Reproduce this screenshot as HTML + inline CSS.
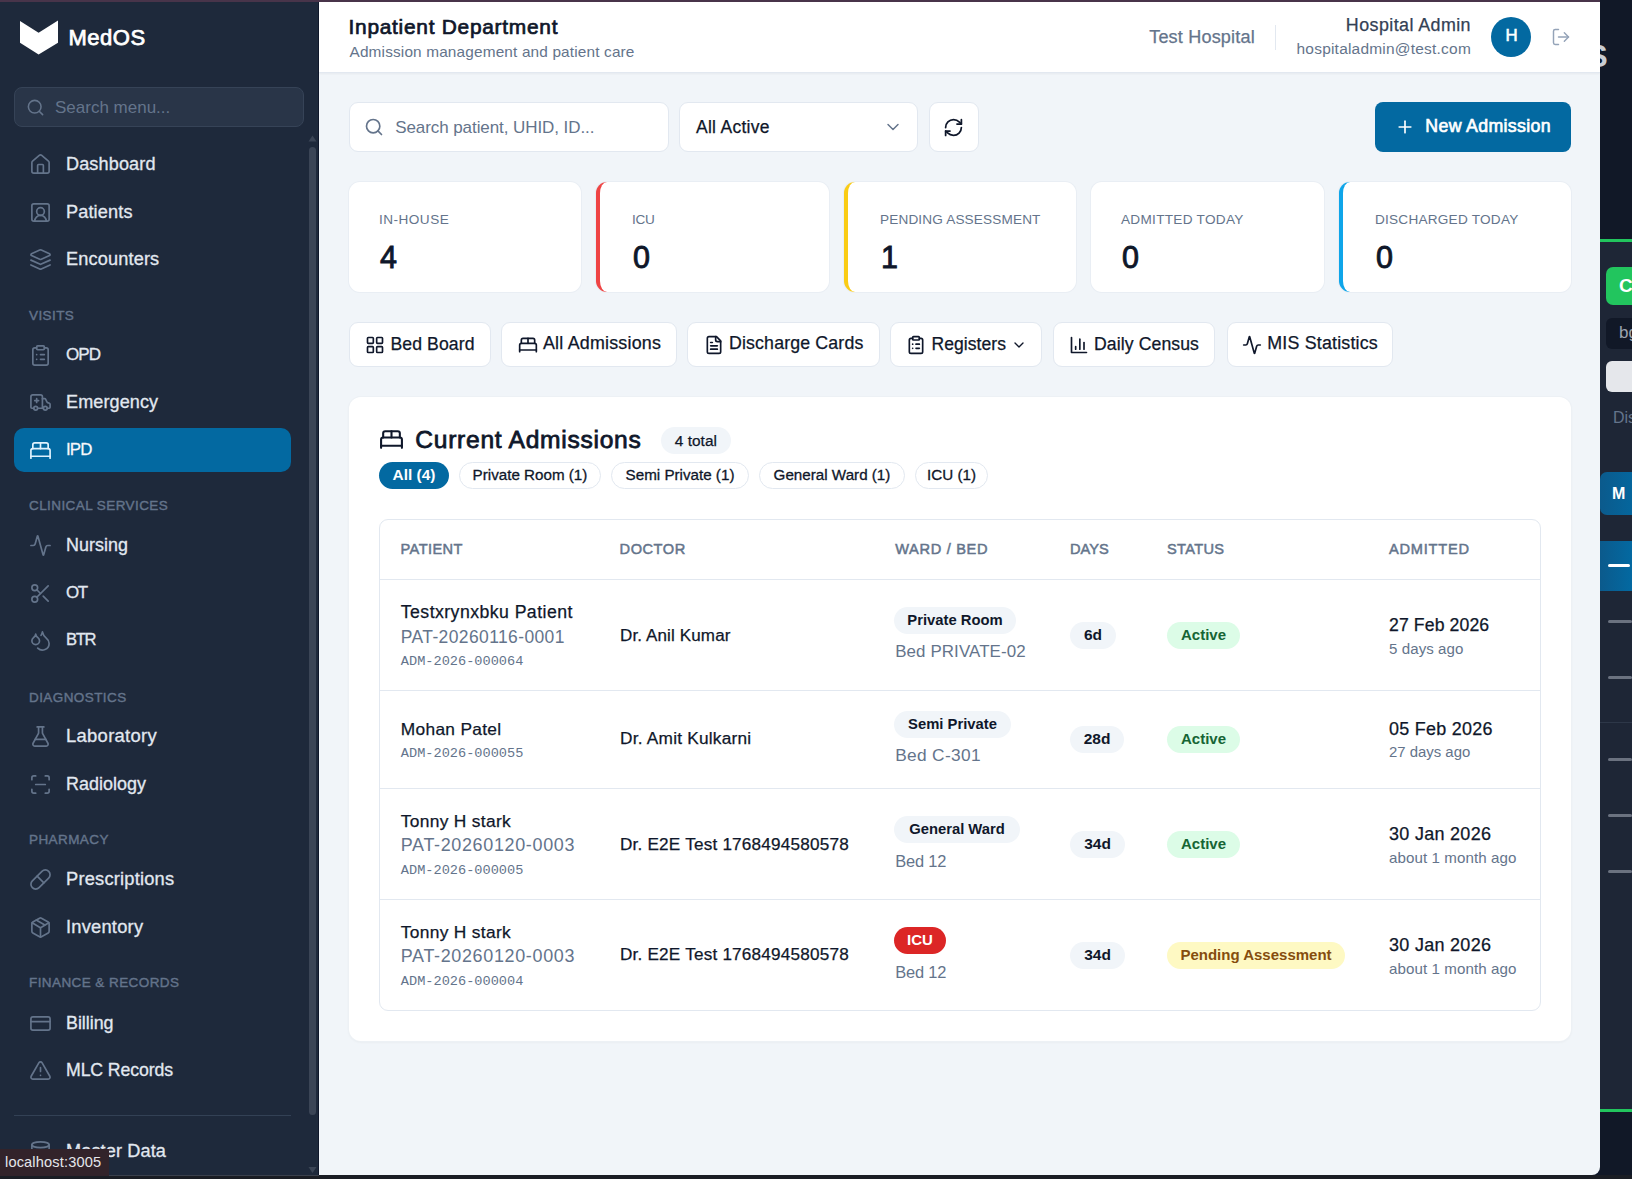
<!DOCTYPE html>
<html><head><meta charset="utf-8">
<style>
*{box-sizing:border-box;margin:0;padding:0}
html,body{width:1632px;height:1179px;overflow:hidden;background:#0f172a;font-family:"Liberation Sans",sans-serif}
.abs{position:absolute}
svg{display:block}
#topstrip{position:absolute;left:0;top:0;width:1600px;height:2px;background:#48344a}
#side{position:absolute;left:0;top:2px;width:319px;height:1173px;background:#1e293b;border-right:1px solid #0f172a;overflow:hidden}
#main{position:absolute;left:319px;top:2px;width:1281px;height:1173px;background:#f1f5f9;overflow:hidden;border-bottom-right-radius:8px}
#right{position:absolute;left:1600px;top:0;width:32px;height:1179px;background:#111827;overflow:hidden}
#bottomstrip{position:absolute;left:0;top:1175px;width:1632px;height:4px;background:#1a1d24}
.nav{position:absolute;left:14px;width:277px;height:44px;border-radius:10px}
.nav .ic{position:absolute;left:15px;top:11px;width:23px;height:23px;color:#64748b}
.nav .tx{position:absolute;left:52px;top:0;line-height:44px;font-size:18.3px;color:#e2e8f0;white-space:nowrap;-webkit-text-stroke:0.3px #e2e8f0}
.nav.act{background:#0369a1}
.nav.act .ic{color:#e0f2fe}
.nav.act .tx{color:#fff}
.t{position:absolute;white-space:nowrap}
.sec{position:absolute;left:29px;font-size:13.5px;line-height:1.15;letter-spacing:0.42px;color:#64748b;font-weight:400;-webkit-text-stroke:0.4px #64748b;white-space:nowrap}
</style></head><body>
<div id="topstrip"></div>
<div id="side">
  <svg class="abs" style="left:0;top:-2px" width="160" height="70">
    <polygon points="20,21 38.6,32.7 58,20.6 58,42.8 38.6,54.6 20,42.8" fill="#fff"/>
  </svg>
  <div class="abs" style="left:68.5px;top:23px;font-size:22px;font-weight:400;letter-spacing:0.5px;-webkit-text-stroke:0.75px #fff;color:#fff;line-height:26px">MedOS</div>
  <div class="abs" style="left:14px;top:85px;width:290px;height:40px;border-radius:8px;background:#293548;border:1px solid #364357"></div>
  <svg class="abs" style="left:26px;top:96px" width="19" height="19" viewBox="0 0 24 24" fill="none" stroke="#64748b" stroke-width="2" stroke-linecap="round" stroke-linejoin="round"><circle cx="11" cy="11" r="8"/><path d="m21 21-4.3-4.3"/></svg>
  <div class="t" style="left:55px;top:96.6px;font-size:17px;line-height:17px;color:#64748b">Search menu...</div>
  <div class="abs" style="left:309px;top:145px;width:7px;height:968px;border-radius:4px;background:#3b4556"></div>
  <svg class="abs" style="left:308px;top:132px" width="10" height="8"><polygon points="0.5,7.5 4.5,1.5 8.5,7.5" fill="#3b4556"/></svg>
  <svg class="abs" style="left:308px;top:1164px" width="10" height="8"><polygon points="0.5,1 4.5,7 8.5,1" fill="#3b4556"/></svg>
  <div class="abs" style="left:14px;top:1113px;width:277px;height:1px;background:#334155"></div>
<div class="nav" style="top:139.8px"><svg class="ic" viewBox="0 0 24 24" fill="none" stroke="currentColor" stroke-width="1.75" stroke-linecap="round" stroke-linejoin="round"><path d="M15 21v-8a1 1 0 0 0-1-1h-4a1 1 0 0 0-1 1v8"/><path d="M3 10a2 2 0 0 1 .709-1.528l7-5.999a2 2 0 0 1 2.582 0l7 5.999A2 2 0 0 1 21 10v9a2 2 0 0 1-2 2H5a2 2 0 0 1-2-2z"/></svg><div class="tx" style="font-size:18.09px;letter-spacing:0.128px">Dashboard</div></div>
<div class="nav" style="top:187.6px"><svg class="ic" viewBox="0 0 24 24" fill="none" stroke="currentColor" stroke-width="1.75" stroke-linecap="round" stroke-linejoin="round"><path d="M18 21a6 6 0 0 0-12 0"/><circle cx="12" cy="11" r="4"/><rect width="18" height="18" x="3" y="3" rx="2"/></svg><div class="tx" style="font-size:18.14px;letter-spacing:0.136px">Patients</div></div>
<div class="nav" style="top:234.8px"><svg class="ic" viewBox="0 0 24 24" fill="none" stroke="currentColor" stroke-width="1.75" stroke-linecap="round" stroke-linejoin="round"><path d="m12.83 2.18a2 2 0 0 0-1.66 0L2.6 6.08a1 1 0 0 0 0 1.83l8.58 3.91a2 2 0 0 0 1.66 0l8.58-3.9a1 1 0 0 0 0-1.83Z"/><path d="m22 17.65-9.17 4.16a2 2 0 0 1-1.66 0L2 17.65"/><path d="m22 12.65-9.17 4.16a2 2 0 0 1-1.66 0L2 12.65"/></svg><div class="tx" style="font-size:18.15px;letter-spacing:0.154px">Encounters</div></div>
<div class="sec" style="top:305.5px">VISITS</div>
<div class="nav" style="top:331.0px"><svg class="ic" viewBox="0 0 24 24" fill="none" stroke="currentColor" stroke-width="1.75" stroke-linecap="round" stroke-linejoin="round"><rect width="8" height="4" x="8" y="2" rx="1" ry="1"/><path d="M16 4h2a2 2 0 0 1 2 2v14a2 2 0 0 1-2 2H6a2 2 0 0 1-2-2V6a2 2 0 0 1 2-2h2"/><path d="M12 11h4"/><path d="M12 16h4"/><path d="M8 11h.01"/><path d="M8 16h.01"/></svg><div class="tx" style="font-size:17.06px;letter-spacing:-0.885px">OPD</div></div>
<div class="nav" style="top:378.0px"><svg class="ic" viewBox="0 0 24 24" fill="none" stroke="currentColor" stroke-width="1.75" stroke-linecap="round" stroke-linejoin="round"><path d="M10 10H6"/><path d="M14 18V6a2 2 0 0 0-2-2H4a2 2 0 0 0-2 2v11a1 1 0 0 0 1 1h2"/><path d="M19 18h2a1 1 0 0 0 1-1v-3.28a1 1 0 0 0-.684-.948l-1.923-.641a1 1 0 0 1-.578-.502l-1.539-3.076A1 1 0 0 0 16.382 8H14"/><path d="M8 8v4"/><path d="M9 18h6"/><circle cx="17" cy="18" r="2"/><circle cx="7" cy="18" r="2"/></svg><div class="tx" style="font-size:18.04px;letter-spacing:0.106px">Emergency</div></div>
<div class="nav act" style="top:426.3px"><svg class="ic" viewBox="0 0 24 24" fill="none" stroke="currentColor" stroke-width="1.75" stroke-linecap="round" stroke-linejoin="round"><path d="M2 20v-8a2 2 0 0 1 2-2h16a2 2 0 0 1 2 2v8"/><path d="M4 10V6a2 2 0 0 1 2-2h12a2 2 0 0 1 2 2v4"/><path d="M12 4v6"/><path d="M2 18h20"/></svg><div class="tx" style="font-size:16.86px;letter-spacing:-0.850px">IPD</div></div>
<div class="sec" style="top:496.3px">CLINICAL SERVICES</div>
<div class="nav" style="top:521.3px"><svg class="ic" viewBox="0 0 24 24" fill="none" stroke="currentColor" stroke-width="1.75" stroke-linecap="round" stroke-linejoin="round"><path d="M22 12h-2.48a2 2 0 0 0-1.93 1.46l-2.35 8.36a.25.25 0 0 1-.48 0L9.24 2.18a.25.25 0 0 0-.48 0l-2.35 8.36A2 2 0 0 1 4.49 12H2"/></svg><div class="tx" style="font-size:17.92px;letter-spacing:0.025px">Nursing</div></div>
<div class="nav" style="top:568.6px"><svg class="ic" viewBox="0 0 24 24" fill="none" stroke="currentColor" stroke-width="1.75" stroke-linecap="round" stroke-linejoin="round"><circle cx="6" cy="6" r="3"/><path d="M8.12 8.12 12 12"/><path d="M20 4 8.12 15.88"/><circle cx="6" cy="18" r="3"/><path d="M14.8 14.8 20 20"/></svg><div class="tx" style="font-size:16.93px;letter-spacing:-1.312px">OT</div></div>
<div class="nav" style="top:616.2px"><svg class="ic" viewBox="0 0 24 24" fill="none" stroke="currentColor" stroke-width="1.75" stroke-linecap="round" stroke-linejoin="round"><path d="M7 16.3c2.2 0 4-1.83 4-4.05 0-1.16-.57-2.26-1.710-3.190S7.29 6.750 7 5.3c-.29 1.45-1.14 2.84-2.29 3.76S3 11.1 3 12.25c0 2.22 1.8 4.05 4 4.05z"/><path d="M12.56 6.6A10.97 10.97 0 0 0 14 3.02c.5 2.5 2 4.9 4 6.5s3 3.5 3 5.5a6.98 6.98 0 0 1-11.91 4.97"/></svg><div class="tx" style="font-size:16.59px;letter-spacing:-1.289px">BTR</div></div>
<div class="sec" style="top:687.5px">DIAGNOSTICS</div>
<div class="nav" style="top:712.4px"><svg class="ic" viewBox="0 0 24 24" fill="none" stroke="currentColor" stroke-width="1.75" stroke-linecap="round" stroke-linejoin="round"><path d="M14 2v6a2 2 0 0 0 .245.96l5.51 10.08A2 2 0 0 1 18 22H6a2 2 0 0 1-1.755-2.96l5.51-10.08A2 2 0 0 0 10 8V2"/><path d="M6.453 15h11.094"/><path d="M8.5 2h7"/></svg><div class="tx" style="font-size:18.43px;letter-spacing:0.291px">Laboratory</div></div>
<div class="nav" style="top:759.8px"><svg class="ic" viewBox="0 0 24 24" fill="none" stroke="currentColor" stroke-width="1.75" stroke-linecap="round" stroke-linejoin="round"><path d="M3 7V5a2 2 0 0 1 2-2h2"/><path d="M17 3h2a2 2 0 0 1 2 2v2"/><path d="M21 17v2a2 2 0 0 1-2 2h-2"/><path d="M7 21H5a2 2 0 0 1-2-2v-2"/><path d="M7 12h10"/></svg><div class="tx" style="font-size:17.93px;letter-spacing:0.031px">Radiology</div></div>
<div class="sec" style="top:829.5px">PHARMACY</div>
<div class="nav" style="top:854.8px"><svg class="ic" viewBox="0 0 24 24" fill="none" stroke="currentColor" stroke-width="1.75" stroke-linecap="round" stroke-linejoin="round"><path d="m10.5 20.5 10-10a4.95 4.95 0 1 0-7-7l-10 10a4.95 4.95 0 1 0 7 7Z"/><path d="m8.5 8.5 7 7"/></svg><div class="tx" style="font-size:18.29px;letter-spacing:0.199px">Prescriptions</div></div>
<div class="nav" style="top:902.6px"><svg class="ic" viewBox="0 0 24 24" fill="none" stroke="currentColor" stroke-width="1.75" stroke-linecap="round" stroke-linejoin="round"><path d="M11 21.73a2 2 0 0 0 2 0l7-4A2 2 0 0 0 21 16V8a2 2 0 0 0-1-1.73l-7-4a2 2 0 0 0-2 0l-7 4A2 2 0 0 0 3 8v8a2 2 0 0 0 1 1.73z"/><path d="M12 22V12"/><path d="m3.3 7 7.703 4.734a2 2 0 0 0 1.994 0L20.7 7"/><path d="m7.5 4.27 9 5.15"/></svg><div class="tx" style="font-size:18.31px;letter-spacing:0.223px">Inventory</div></div>
<div class="sec" style="top:972.7px">FINANCE &amp; RECORDS</div>
<div class="nav" style="top:998.8px"><svg class="ic" viewBox="0 0 24 24" fill="none" stroke="currentColor" stroke-width="1.75" stroke-linecap="round" stroke-linejoin="round"><rect width="20" height="14" x="2" y="5" rx="2"/><line x1="2" x2="22" y1="10" y2="10"/></svg><div class="tx" style="font-size:17.84px;letter-spacing:-0.016px">Billing</div></div>
<div class="nav" style="top:1046.2px"><svg class="ic" viewBox="0 0 24 24" fill="none" stroke="currentColor" stroke-width="1.75" stroke-linecap="round" stroke-linejoin="round"><path d="m21.73 18-8-14a2 2 0 0 0-3.48 0l-8 14A2 2 0 0 0 4 21h16a2 2 0 0 0 1.73-3"/><path d="M12 9v4"/><path d="M12 17h.01"/></svg><div class="tx" style="font-size:17.71px;letter-spacing:-0.104px">MLC Records</div></div>
<div class="nav" style="top:1126.8px"><svg class="ic" viewBox="0 0 24 24" fill="none" stroke="currentColor" stroke-width="1.75" stroke-linecap="round" stroke-linejoin="round"><ellipse cx="12" cy="5" rx="9" ry="3"/><path d="M3 5V19A9 3 0 0 0 21 19V5"/><path d="M3 12A9 3 0 0 0 21 12"/></svg><div class="tx" style="font-size:18.11px;letter-spacing:0.127px">Master Data</div></div>
</div>
<div id="main">
  <div class="abs" style="left:0;top:0;width:1281px;height:71px;background:#fff;border-bottom:1px solid #e2e8f0;box-shadow:0 1px 2px rgba(15,23,42,0.05)"></div>
</div>
<div class="t" style="left:348.5px;top:16.51px;font-size:20.9px;line-height:20.9px;font-weight:400;color:#0f172a;letter-spacing:0.729px;font-family:'Liberation Sans';-webkit-text-stroke:0.7px #0f172a">Inpatient Department</div>
<div class="t" style="left:349.5px;top:44.38px;font-size:15.38px;line-height:15.38px;font-weight:400;color:#64748b;letter-spacing:0.151px;font-family:'Liberation Sans';">Admission management and patient care</div>
<div class="t" style="left:1149.2px;top:28.30px;font-size:18.08px;line-height:18.08px;font-weight:400;color:#64748b;letter-spacing:0.165px;font-family:'Liberation Sans';-webkit-text-stroke:0.25px #64748b">Test Hospital</div>
<div class="abs" style="left:1275px;top:25px;width:1px;height:25px;background:#e2e8f0"></div>
<div class="t" style="right:161.0px;top:17.36px;font-size:17.88px;line-height:17.88px;font-weight:400;color:#334155;letter-spacing:0.429px;font-family:'Liberation Sans';-webkit-text-stroke:0.25px #334155">Hospital Admin</div>
<div class="t" style="right:161.0px;top:40.59px;font-size:15.49px;line-height:15.49px;font-weight:400;color:#64748b;letter-spacing:0.213px;font-family:'Liberation Sans';">hospitaladmin@test.com</div>
<div class="abs" style="left:1491px;top:17px;width:40px;height:40px;border-radius:50%;background:#0369a1"></div>
<div class="t" style="left:1505.5px;top:28.28px;font-size:16.8px;line-height:16.8px;font-weight:400;color:#fff;letter-spacing:0px;font-family:'Liberation Sans';-webkit-text-stroke:0.6px #fff">H</div>
<svg class="abs" style="left:1551px;top:27px" width="20" height="20" viewBox="0 0 24 24" fill="none" stroke="#94a3b8" stroke-width="1.75" stroke-linecap="round" stroke-linejoin="round"><path d="M9 21H5a2 2 0 0 1-2-2V5a2 2 0 0 1 2-2h4"/><polyline points="16 17 21 12 16 7"/><line x1="21" x2="9" y1="12" y2="12"/></svg>
<div class="abs" style="left:349px;top:102px;width:320px;height:50px;background:#fff;border:1px solid #e2e8f0;border-radius:9px"></div>
<svg class="abs" style="left:364px;top:117px" width="20" height="20" viewBox="0 0 24 24" fill="none" stroke="#64748b" stroke-width="2" stroke-linecap="round" stroke-linejoin="round"><circle cx="11" cy="11" r="8"/><path d="m21 21-4.3-4.3"/></svg>
<div class="t" style="left:395.2px;top:119.20px;font-size:17.01px;line-height:17.01px;font-weight:400;color:#64748b;letter-spacing:-0.076px;font-family:'Liberation Sans';">Search patient, UHID, ID...</div>
<div class="abs" style="left:679px;top:102px;width:239px;height:50px;background:#fff;border:1px solid #e2e8f0;border-radius:9px"></div>
<div class="t" style="left:696.0px;top:118.68px;font-size:17.51px;line-height:17.51px;font-weight:400;color:#0f172a;letter-spacing:0.274px;font-family:'Liberation Sans';-webkit-text-stroke:0.25px #0f172a">All Active</div>
<svg class="abs" style="left:883px;top:117px" width="20" height="20" viewBox="0 0 24 24" fill="none" stroke="#64748b" stroke-width="1.75" stroke-linecap="round" stroke-linejoin="round"><path d="m6 9 6 6 6-6"/></svg>
<div class="abs" style="left:929px;top:102px;width:50px;height:50px;background:#fff;border:1px solid #e2e8f0;border-radius:9px"></div>
<svg class="abs" style="left:943px;top:117px" width="21" height="21" viewBox="0 0 24 24" fill="none" stroke="#0f172a" stroke-width="2" stroke-linecap="round" stroke-linejoin="round"><path d="M3 12a9 9 0 0 1 9-9 9.75 9.75 0 0 1 6.74 2.74L21 8"/><path d="M21 3v5h-5"/><path d="M21 12a9 9 0 0 1-9 9 9.75 9.75 0 0 1-6.74-2.74L3 16"/><path d="M8 16H3v5"/></svg>
<div class="abs" style="left:1375px;top:102px;width:196px;height:50px;background:#0369a1;border-radius:8px"></div>
<svg class="abs" style="left:1395px;top:117px" width="20" height="20" viewBox="0 0 24 24" fill="none" stroke="#fff" stroke-width="2" stroke-linecap="round" stroke-linejoin="round"><path d="M5 12h14"/><path d="M12 5v14"/></svg>
<div class="t" style="left:1425.3px;top:118.17px;font-size:17.76px;line-height:17.76px;font-weight:400;color:#fff;letter-spacing:0.332px;font-family:'Liberation Sans';-webkit-text-stroke:0.65px #fff">New Admission</div>
<div class="abs" style="left:349px;top:182px;width:232px;height:110px;background:#fff;border-radius:11px;box-shadow:0 0 0 1px #e9eef4"></div>
<div class="t" style="left:379.0px;top:212.59px;font-size:13.6px;line-height:13.6px;font-weight:400;color:#64748b;letter-spacing:0.47237499999999955px;font-family:'Liberation Sans';">IN-HOUSE</div>
<div class="t" style="left:380.0px;top:241.98px;font-size:30.5px;line-height:30.5px;font-weight:400;color:#0f172a;letter-spacing:0px;font-family:'Liberation Sans';-webkit-text-stroke:0.9px #0f172a">4</div>
<div class="abs" style="left:596px;top:182px;width:233px;height:110px;background:#fff;border-radius:11px;border-left:4px solid #ef4444;box-shadow:0 0 0 1px #e9eef4"></div>
<div class="t" style="left:632.0px;top:212.59px;font-size:13.6px;line-height:13.6px;font-weight:400;color:#64748b;letter-spacing:-0.31087499999999935px;font-family:'Liberation Sans';">ICU</div>
<div class="t" style="left:633.0px;top:241.98px;font-size:30.5px;line-height:30.5px;font-weight:400;color:#0f172a;letter-spacing:0px;font-family:'Liberation Sans';-webkit-text-stroke:0.9px #0f172a">0</div>
<div class="abs" style="left:844px;top:182px;width:232px;height:110px;background:#fff;border-radius:11px;border-left:4px solid #facc15;box-shadow:0 0 0 1px #e9eef4"></div>
<div class="t" style="left:880.0px;top:212.59px;font-size:13.6px;line-height:13.6px;font-weight:400;color:#64748b;letter-spacing:0.14992647058823602px;font-family:'Liberation Sans';">PENDING ASSESSMENT</div>
<div class="t" style="left:881.0px;top:241.98px;font-size:30.5px;line-height:30.5px;font-weight:400;color:#0f172a;letter-spacing:0px;font-family:'Liberation Sans';-webkit-text-stroke:0.9px #0f172a">1</div>
<div class="abs" style="left:1091px;top:182px;width:233px;height:110px;background:#fff;border-radius:11px;box-shadow:0 0 0 1px #e9eef4"></div>
<div class="t" style="left:1121.0px;top:212.59px;font-size:13.6px;line-height:13.6px;font-weight:400;color:#64748b;letter-spacing:0.2898173076923084px;font-family:'Liberation Sans';">ADMITTED TODAY</div>
<div class="t" style="left:1122.0px;top:241.98px;font-size:30.5px;line-height:30.5px;font-weight:400;color:#0f172a;letter-spacing:0px;font-family:'Liberation Sans';-webkit-text-stroke:0.9px #0f172a">0</div>
<div class="abs" style="left:1339px;top:182px;width:232px;height:110px;background:#fff;border-radius:11px;border-left:4px solid #0ea5e9;box-shadow:0 0 0 1px #e9eef4"></div>
<div class="t" style="left:1375.0px;top:212.59px;font-size:13.6px;line-height:13.6px;font-weight:400;color:#64748b;letter-spacing:0.23294166666666835px;font-family:'Liberation Sans';">DISCHARGED TODAY</div>
<div class="t" style="left:1376.0px;top:241.98px;font-size:30.5px;line-height:30.5px;font-weight:400;color:#0f172a;letter-spacing:0px;font-family:'Liberation Sans';-webkit-text-stroke:0.9px #0f172a">0</div>
<div class="abs" style="left:349px;top:322px;width:142px;height:45px;background:#fff;border:1px solid #e2e8f0;border-radius:9px"></div>
<svg class="abs" style="left:364.9px;top:334.5px" width="20" height="20" viewBox="0 0 24 24" fill="none" stroke="#0f172a" stroke-width="2" stroke-linecap="round" stroke-linejoin="round"><rect width="7" height="7" x="3" y="3" rx="1"/><rect width="7" height="7" x="14" y="3" rx="1"/><rect width="7" height="7" x="14" y="14" rx="1"/><rect width="7" height="7" x="3" y="14" rx="1"/></svg>
<div class="t" style="left:390.4px;top:335.57px;font-size:17.64px;line-height:17.64px;font-weight:400;color:#0f172a;letter-spacing:0.107px;font-family:'Liberation Sans';-webkit-text-stroke:0.25px #0f172a">Bed Board</div>
<div class="abs" style="left:501px;top:322px;width:176px;height:45px;background:#fff;border:1px solid #e2e8f0;border-radius:9px"></div>
<svg class="abs" style="left:517.5px;top:334.5px" width="20" height="20" viewBox="0 0 24 24" fill="none" stroke="#0f172a" stroke-width="2" stroke-linecap="round" stroke-linejoin="round"><path d="M2 20v-8a2 2 0 0 1 2-2h16a2 2 0 0 1 2 2v8"/><path d="M4 10V6a2 2 0 0 1 2-2h12a2 2 0 0 1 2 2v4"/><path d="M12 4v6"/><path d="M2 18h20"/></svg>
<div class="t" style="left:543.0px;top:335.36px;font-size:17.88px;line-height:17.88px;font-weight:400;color:#0f172a;letter-spacing:0.21px;font-family:'Liberation Sans';-webkit-text-stroke:0.25px #0f172a">All Admissions</div>
<div class="abs" style="left:687px;top:322px;width:193px;height:45px;background:#fff;border:1px solid #e2e8f0;border-radius:9px"></div>
<svg class="abs" style="left:703.5px;top:334.5px" width="20" height="20" viewBox="0 0 24 24" fill="none" stroke="#0f172a" stroke-width="2" stroke-linecap="round" stroke-linejoin="round"><path d="M15 2H6a2 2 0 0 0-2 2v16a2 2 0 0 0 2 2h12a2 2 0 0 0 2-2V7Z"/><path d="M14 2v4a2 2 0 0 0 2 2h4"/><path d="M10 9H8"/><path d="M16 13H8"/><path d="M16 17H8"/></svg>
<div class="t" style="left:729.0px;top:335.47px;font-size:17.75px;line-height:17.75px;font-weight:400;color:#0f172a;letter-spacing:0.153px;font-family:'Liberation Sans';-webkit-text-stroke:0.25px #0f172a">Discharge Cards</div>
<div class="abs" style="left:890px;top:322px;width:152px;height:45px;background:#fff;border:1px solid #e2e8f0;border-radius:9px"></div>
<svg class="abs" style="left:906.0px;top:334.5px" width="20" height="20" viewBox="0 0 24 24" fill="none" stroke="#0f172a" stroke-width="2" stroke-linecap="round" stroke-linejoin="round"><rect width="8" height="4" x="8" y="2" rx="1" ry="1"/><path d="M16 4h2a2 2 0 0 1 2 2v14a2 2 0 0 1-2 2H6a2 2 0 0 1-2-2V6a2 2 0 0 1 2-2h2"/><path d="M12 11h4"/><path d="M12 16h4"/><path d="M8 11h.01"/><path d="M8 16h.01"/></svg>
<div class="t" style="left:931.5px;top:335.64px;font-size:17.55px;line-height:17.55px;font-weight:400;color:#0f172a;letter-spacing:0.048px;font-family:'Liberation Sans';-webkit-text-stroke:0.25px #0f172a">Registers</div>
<div class="abs" style="left:1053px;top:322px;width:162px;height:45px;background:#fff;border:1px solid #e2e8f0;border-radius:9px"></div>
<svg class="abs" style="left:1068.5px;top:334.5px" width="20" height="20" viewBox="0 0 24 24" fill="none" stroke="#0f172a" stroke-width="2" stroke-linecap="round" stroke-linejoin="round"><path d="M3 3v18h18"/><path d="M18 17V9"/><path d="M13 17V5"/><path d="M8 17v-3"/></svg>
<div class="t" style="left:1094.0px;top:335.57px;font-size:17.64px;line-height:17.64px;font-weight:400;color:#0f172a;letter-spacing:0.098px;font-family:'Liberation Sans';-webkit-text-stroke:0.25px #0f172a">Daily Census</div>
<div class="abs" style="left:1227px;top:322px;width:166px;height:45px;background:#fff;border:1px solid #e2e8f0;border-radius:9px"></div>
<svg class="abs" style="left:1241.8px;top:334.5px" width="20" height="20" viewBox="0 0 24 24" fill="none" stroke="#0f172a" stroke-width="2" stroke-linecap="round" stroke-linejoin="round"><path d="M22 12h-2.48a2 2 0 0 0-1.93 1.46l-2.35 8.36a.25.25 0 0 1-.48 0L9.24 2.18a.25.25 0 0 0-.48 0l-2.35 8.36A2 2 0 0 1 4.49 12H2"/></svg>
<div class="t" style="left:1267.3px;top:335.39px;font-size:17.85px;line-height:17.85px;font-weight:400;color:#0f172a;letter-spacing:0.183px;font-family:'Liberation Sans';-webkit-text-stroke:0.25px #0f172a">MIS Statistics</div>
<svg class="abs" style="left:1010.6px;top:336.6px" width="16" height="16" viewBox="0 0 24 24" fill="none" stroke="#0f172a" stroke-width="2" stroke-linecap="round" stroke-linejoin="round"><path d="m6 9 6 6 6-6"/></svg>
<div class="abs" style="left:349px;top:397px;width:1222px;height:644px;background:#fff;border-radius:12px;box-shadow:0 0 0 1px #edf1f5,0 1px 3px rgba(15,23,42,0.06)"></div>
<svg class="abs" style="left:379px;top:427px" width="25" height="25" viewBox="0 0 24 24" fill="none" stroke="#0f172a" stroke-width="2" stroke-linecap="round" stroke-linejoin="round"><path d="M2 20v-8a2 2 0 0 1 2-2h16a2 2 0 0 1 2 2v8"/><path d="M4 10V6a2 2 0 0 1 2-2h12a2 2 0 0 1 2 2v4"/><path d="M12 4v6"/><path d="M2 18h20"/></svg>
<div class="t" style="left:415.3px;top:428.48px;font-size:24.6px;line-height:24.6px;font-weight:400;color:#0f172a;letter-spacing:0.721px;font-family:'Liberation Sans';-webkit-text-stroke:0.8px #0f172a">Current Admissions</div>
<div class="abs" style="left:661px;top:427px;width:70px;height:27px;background:#f1f5f9;border-radius:14px"></div>
<div class="t" style="left:674.7px;top:433.02px;font-size:15.45px;line-height:15.45px;font-weight:400;color:#0f172a;letter-spacing:0.038px;font-family:'Liberation Sans';-webkit-text-stroke:0.25px #0f172a">4 total</div>
<div class="abs" style="left:379px;top:462px;width:70px;height:27px;background:#0369a1;border-radius:14px"></div>
<div class="t" style="left:379px;width:70px;text-align:center;top:467.2px;font-size:15.4px;line-height:15.4px;font-weight:700;color:#fff">All (4)</div>
<div class="abs" style="left:459px;top:462px;width:142px;height:27px;background:#fff;border:1px solid #e2e8f0;border-radius:14px"></div>
<div class="t" style="left:459px;width:142px;text-align:center;top:467.3px;font-size:15.2px;line-height:15.2px;font-weight:400;color:#0f172a;-webkit-text-stroke:0.3px #0f172a">Private Room (1)</div>
<div class="abs" style="left:611px;top:462px;width:138px;height:27px;background:#fff;border:1px solid #e2e8f0;border-radius:14px"></div>
<div class="t" style="left:611px;width:138px;text-align:center;top:467.3px;font-size:15.2px;line-height:15.2px;font-weight:400;color:#0f172a;-webkit-text-stroke:0.3px #0f172a">Semi Private (1)</div>
<div class="abs" style="left:759px;top:462px;width:146px;height:27px;background:#fff;border:1px solid #e2e8f0;border-radius:14px"></div>
<div class="t" style="left:759px;width:146px;text-align:center;top:467.3px;font-size:15.2px;line-height:15.2px;font-weight:400;color:#0f172a;-webkit-text-stroke:0.3px #0f172a">General Ward (1)</div>
<div class="abs" style="left:915px;top:462px;width:73px;height:27px;background:#fff;border:1px solid #e2e8f0;border-radius:14px"></div>
<div class="t" style="left:915px;width:73px;text-align:center;top:467.3px;font-size:15.2px;line-height:15.2px;font-weight:400;color:#0f172a;-webkit-text-stroke:0.3px #0f172a">ICU (1)</div>
<div class="abs" style="left:379px;top:519px;width:1162px;height:492px;border:1px solid #e2e8f0;border-radius:9px"></div>
<div class="t" style="left:400.5px;top:541.64px;font-size:14.6px;line-height:14.6px;font-weight:400;color:#64748b;letter-spacing:0.41940104166666714px;font-family:'Liberation Sans';-webkit-text-stroke:0.5px #64748b">PATIENT</div>
<div class="t" style="left:619.6px;top:541.64px;font-size:14.6px;line-height:14.6px;font-weight:400;color:#64748b;letter-spacing:0.5206562500000004px;font-family:'Liberation Sans';-webkit-text-stroke:0.5px #64748b">DOCTOR</div>
<div class="t" style="left:895.2px;top:541.64px;font-size:14.6px;line-height:14.6px;font-weight:400;color:#64748b;letter-spacing:0.6826284722222229px;font-family:'Liberation Sans';-webkit-text-stroke:0.5px #64748b">WARD / BED</div>
<div class="t" style="left:1070.0px;top:541.64px;font-size:14.6px;line-height:14.6px;font-weight:400;color:#64748b;letter-spacing:0.0078958333333361px;font-family:'Liberation Sans';-webkit-text-stroke:0.5px #64748b">DAYS</div>
<div class="t" style="left:1167.0px;top:541.64px;font-size:14.6px;line-height:14.6px;font-weight:400;color:#64748b;letter-spacing:0.31449374999999974px;font-family:'Liberation Sans';-webkit-text-stroke:0.5px #64748b">STATUS</div>
<div class="t" style="left:1389.0px;top:541.64px;font-size:14.6px;line-height:14.6px;font-weight:400;color:#64748b;letter-spacing:0.768941964285716px;font-family:'Liberation Sans';-webkit-text-stroke:0.5px #64748b">ADMITTED</div>
<div class="abs" style="left:380px;top:579px;width:1160px;height:1px;background:#e2e8f0"></div>
<div class="abs" style="left:380px;top:690px;width:1160px;height:1px;background:#e2e8f0"></div>
<div class="abs" style="left:380px;top:788px;width:1160px;height:1px;background:#e2e8f0"></div>
<div class="abs" style="left:380px;top:899px;width:1160px;height:1px;background:#e2e8f0"></div>
<div class="t" style="left:400.8px;top:603.73px;font-size:17.68px;line-height:17.68px;font-weight:400;color:#0f172a;letter-spacing:0.447px;font-family:'Liberation Sans';-webkit-text-stroke:0.25px #0f172a">Testxrynxbku Patient</div>
<div class="t" style="left:400.8px;top:628.61px;font-size:17.47px;line-height:17.47px;font-weight:400;color:#64748b;letter-spacing:0.402px;font-family:'Liberation Sans';">PAT-20260116-0001</div>
<div class="t" style="left:400.8px;top:654.86px;font-size:13.62px;line-height:13.62px;font-weight:400;color:#64748b;letter-spacing:0.0px;font-family:'Liberation Mono';">ADM-2026-000064</div>
<div class="t" style="left:620.0px;top:626.99px;font-size:17.02px;line-height:17.02px;font-weight:400;color:#0f172a;letter-spacing:0.13px;font-family:'Liberation Sans';-webkit-text-stroke:0.25px #0f172a">Dr. Anil Kumar</div>
<div class="abs" style="left:894px;top:607px;width:122px;height:27px;background:#f1f5f9;border-radius:14px"></div>
<div class="t" style="left:894px;width:122px;text-align:center;top:612.8px;font-size:14.8px;line-height:14.8px;font-weight:700;color:#0f172a">Private Room</div>
<div class="t" style="left:895.2px;top:643.67px;font-size:16.93px;line-height:16.93px;font-weight:400;color:#64748b;letter-spacing:0.099px;font-family:'Liberation Sans';">Bed PRIVATE-02</div>
<div class="abs" style="left:1070px;top:622px;width:46px;height:27px;background:#f1f5f9;border-radius:14px"></div>
<div class="t" style="left:1070px;width:46px;text-align:center;top:627.2px;font-size:15.5px;line-height:15.5px;font-weight:700;color:#0f172a">6d</div>
<div class="abs" style="left:1167px;top:622px;width:73px;height:27px;background:#dcfce7;border-radius:14px"></div>
<div class="t" style="left:1167px;width:73px;text-align:center;top:626.8px;font-size:15px;line-height:15px;font-weight:700;color:#166534">Active</div>
<div class="t" style="left:1389.0px;top:617.26px;font-size:17.65px;line-height:17.65px;font-weight:400;color:#0f172a;letter-spacing:0.109px;font-family:'Liberation Sans';-webkit-text-stroke:0.25px #0f172a">27 Feb 2026</div>
<div class="t" style="left:1389.0px;top:641.13px;font-size:15.08px;line-height:15.08px;font-weight:400;color:#64748b;letter-spacing:0.072px;font-family:'Liberation Sans';">5 days ago</div>
<div class="t" style="left:400.8px;top:721.04px;font-size:17.32px;line-height:17.32px;font-weight:400;color:#0f172a;letter-spacing:0.315px;font-family:'Liberation Sans';-webkit-text-stroke:0.25px #0f172a">Mohan Patel</div>
<div class="t" style="left:400.8px;top:747.06px;font-size:13.62px;line-height:13.62px;font-weight:400;color:#64748b;letter-spacing:0.0px;font-family:'Liberation Mono';">ADM-2026-000055</div>
<div class="t" style="left:620.0px;top:730.09px;font-size:17.26px;line-height:17.26px;font-weight:400;color:#0f172a;letter-spacing:0.229px;font-family:'Liberation Sans';-webkit-text-stroke:0.25px #0f172a">Dr. Amit Kulkarni</div>
<div class="abs" style="left:894px;top:711px;width:117px;height:27px;background:#f1f5f9;border-radius:14px"></div>
<div class="t" style="left:894px;width:117px;text-align:center;top:716.8px;font-size:14.8px;line-height:14.8px;font-weight:700;color:#0f172a">Semi Private</div>
<div class="t" style="left:895.2px;top:746.85px;font-size:17.31px;line-height:17.31px;font-weight:400;color:#64748b;letter-spacing:0.33px;font-family:'Liberation Sans';">Bed C-301</div>
<div class="abs" style="left:1070px;top:726px;width:54px;height:27px;background:#f1f5f9;border-radius:14px"></div>
<div class="t" style="left:1070px;width:54px;text-align:center;top:731.2px;font-size:15.5px;line-height:15.5px;font-weight:700;color:#0f172a">28d</div>
<div class="abs" style="left:1167px;top:726px;width:73px;height:27px;background:#dcfce7;border-radius:14px"></div>
<div class="t" style="left:1167px;width:73px;text-align:center;top:730.8px;font-size:15px;line-height:15px;font-weight:700;color:#166534">Active</div>
<div class="t" style="left:1389.0px;top:720.81px;font-size:17.95px;line-height:17.95px;font-weight:400;color:#0f172a;letter-spacing:0.274px;font-family:'Liberation Sans';-webkit-text-stroke:0.25px #0f172a">05 Feb 2026</div>
<div class="t" style="left:1389.0px;top:745.16px;font-size:14.93px;line-height:14.93px;font-weight:400;color:#64748b;letter-spacing:-0.006px;font-family:'Liberation Sans';">27 days ago</div>
<div class="t" style="left:400.8px;top:813.19px;font-size:17.38px;line-height:17.38px;font-weight:400;color:#0f172a;letter-spacing:0.315px;font-family:'Liberation Sans';-webkit-text-stroke:0.25px #0f172a">Tonny H stark</div>
<div class="t" style="left:400.8px;top:837.11px;font-size:17.94px;line-height:17.94px;font-weight:400;color:#64748b;letter-spacing:0.669px;font-family:'Liberation Sans';">PAT-20260120-0003</div>
<div class="t" style="left:400.8px;top:863.86px;font-size:13.62px;line-height:13.62px;font-weight:400;color:#64748b;letter-spacing:0.0px;font-family:'Liberation Mono';">ADM-2026-000005</div>
<div class="t" style="left:620.0px;top:835.78px;font-size:17.15px;line-height:17.15px;font-weight:400;color:#0f172a;letter-spacing:0.205px;font-family:'Liberation Sans';-webkit-text-stroke:0.25px #0f172a">Dr. E2E Test 1768494580578</div>
<div class="abs" style="left:894px;top:816px;width:126px;height:27px;background:#f1f5f9;border-radius:14px"></div>
<div class="t" style="left:894px;width:126px;text-align:center;top:821.8px;font-size:14.8px;line-height:14.8px;font-weight:700;color:#0f172a">General Ward</div>
<div class="t" style="left:895.2px;top:852.98px;font-size:16.44px;line-height:16.44px;font-weight:400;color:#64748b;letter-spacing:-0.202px;font-family:'Liberation Sans';">Bed 12</div>
<div class="abs" style="left:1070px;top:831px;width:55px;height:27px;background:#f1f5f9;border-radius:14px"></div>
<div class="t" style="left:1070px;width:55px;text-align:center;top:836.2px;font-size:15.5px;line-height:15.5px;font-weight:700;color:#0f172a">34d</div>
<div class="abs" style="left:1167px;top:831px;width:73px;height:27px;background:#dcfce7;border-radius:14px"></div>
<div class="t" style="left:1167px;width:73px;text-align:center;top:835.8px;font-size:15px;line-height:15px;font-weight:700;color:#166534">Active</div>
<div class="t" style="left:1389.0px;top:825.17px;font-size:17.99px;line-height:17.99px;font-weight:400;color:#0f172a;letter-spacing:0.295px;font-family:'Liberation Sans';-webkit-text-stroke:0.25px #0f172a">30 Jan 2026</div>
<div class="t" style="left:1389.0px;top:849.60px;font-size:15.12px;line-height:15.12px;font-weight:400;color:#64748b;letter-spacing:0.093px;font-family:'Liberation Sans';">about 1 month ago</div>
<div class="t" style="left:400.8px;top:924.39px;font-size:17.38px;line-height:17.38px;font-weight:400;color:#0f172a;letter-spacing:0.315px;font-family:'Liberation Sans';-webkit-text-stroke:0.25px #0f172a">Tonny H stark</div>
<div class="t" style="left:400.8px;top:948.21px;font-size:17.94px;line-height:17.94px;font-weight:400;color:#64748b;letter-spacing:0.669px;font-family:'Liberation Sans';">PAT-20260120-0003</div>
<div class="t" style="left:400.8px;top:975.06px;font-size:13.62px;line-height:13.62px;font-weight:400;color:#64748b;letter-spacing:0.0px;font-family:'Liberation Mono';">ADM-2026-000004</div>
<div class="t" style="left:620.0px;top:946.18px;font-size:17.15px;line-height:17.15px;font-weight:400;color:#0f172a;letter-spacing:0.205px;font-family:'Liberation Sans';-webkit-text-stroke:0.25px #0f172a">Dr. E2E Test 1768494580578</div>
<div class="abs" style="left:894px;top:927px;width:52px;height:27px;background:#dc2626;border-radius:14px"></div>
<div class="t" style="left:894px;width:52px;text-align:center;top:931.8px;font-size:15px;line-height:15px;font-weight:700;color:#fff">ICU</div>
<div class="t" style="left:895.2px;top:963.78px;font-size:16.44px;line-height:16.44px;font-weight:400;color:#64748b;letter-spacing:-0.202px;font-family:'Liberation Sans';">Bed 12</div>
<div class="abs" style="left:1070px;top:942px;width:55px;height:27px;background:#f1f5f9;border-radius:14px"></div>
<div class="t" style="left:1070px;width:55px;text-align:center;top:947.2px;font-size:15.5px;line-height:15.5px;font-weight:700;color:#0f172a">34d</div>
<div class="abs" style="left:1167px;top:942px;width:178px;height:27px;background:#fef9c3;border-radius:14px"></div>
<div class="t" style="left:1167px;width:178px;text-align:center;top:946.8px;font-size:15px;line-height:15px;font-weight:700;color:#854d0e">Pending Assessment</div>
<div class="t" style="left:1389.0px;top:936.27px;font-size:17.99px;line-height:17.99px;font-weight:400;color:#0f172a;letter-spacing:0.295px;font-family:'Liberation Sans';-webkit-text-stroke:0.25px #0f172a">30 Jan 2026</div>
<div class="t" style="left:1389.0px;top:960.70px;font-size:15.12px;line-height:15.12px;font-weight:400;color:#64748b;letter-spacing:0.093px;font-family:'Liberation Sans';">about 1 month ago</div>
<div id="right">
  <div class="abs" style="left:0;top:242px;width:32px;height:867px;background:#1e2636"></div>
  <div class="abs" style="left:0;top:239px;width:32px;height:3px;background:#22c55e"></div>
  <div class="abs" style="left:0;top:1109px;width:32px;height:3px;background:#22c55e"></div>
  <div class="abs" style="left:6px;top:267px;width:40px;height:38px;border-radius:7px;background:#22c55e"></div>
  <div class="t" style="left:19px;top:275px;font-size:19px;line-height:22px;font-weight:700;color:#fff">C</div>
  <div class="abs" style="left:6px;top:318px;width:40px;height:31px;border-radius:6px;background:#111827"></div>
  <div class="t" style="left:19px;top:323px;font-size:17px;line-height:20px;color:#9ca3af">bg</div>
  <div class="abs" style="left:6px;top:361px;width:40px;height:31px;border-radius:6px;background:#e5e7eb"></div>
  <div class="t" style="left:13px;top:409px;font-size:16px;line-height:18px;color:#64748b">Dis</div>
  <div class="abs" style="left:0px;top:472px;width:40px;height:43px;border-radius:7px 0 0 7px;background:linear-gradient(90deg,#0b5a8c,#0369a1)"></div>
  <div class="t" style="left:12px;top:485px;font-size:16px;line-height:18px;font-weight:700;color:#fff">M</div>
  <div class="abs" style="left:0px;top:541px;width:32px;height:50px;background:linear-gradient(90deg,#0b5a8c,#0369a1)"></div>
  <div class="abs" style="left:8px;top:564px;width:22px;height:3px;background:#fff;border-radius:2px"></div>
  <div class="abs" style="left:8px;top:620px;width:24px;height:3px;background:#6b7280;border-radius:2px"></div>
  <div class="abs" style="left:8px;top:676px;width:24px;height:3px;background:#6b7280;border-radius:2px"></div>
  <div class="abs" style="left:0;top:722px;width:32px;height:1px;background:#2d3748"></div>
  <div class="abs" style="left:8px;top:758px;width:24px;height:3px;background:#6b7280;border-radius:2px"></div>
  <div class="abs" style="left:8px;top:814px;width:24px;height:3px;background:#6b7280;border-radius:2px"></div>
  <div class="abs" style="left:8px;top:870px;width:24px;height:3px;background:#6b7280;border-radius:2px"></div>
  <div class="t" style="left:-13px;top:40px;font-size:31px;line-height:34px;font-weight:700;color:#c9ccd2">S</div>
</div>
<div id="bottomstrip"><div class="abs" style="left:0;top:0;width:319px;height:1px;background:#3a404c"></div></div>
<div class="abs" style="left:0;top:1149px;width:109px;height:27px;background:#32232a"></div>
<div class="t" style="left:5px;top:1155px;font-size:14.6px;line-height:14.6px;letter-spacing:0.15px;color:#e5e7eb">localhost:3005</div>
</body></html>
